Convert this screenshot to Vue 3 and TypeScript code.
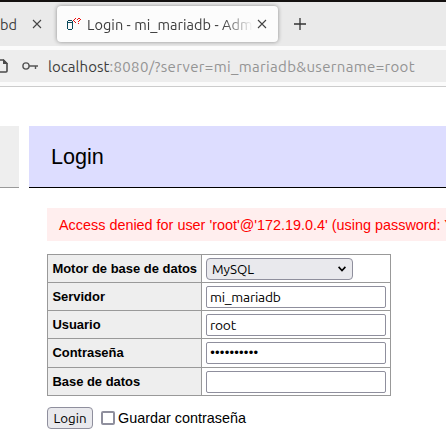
<script setup lang="ts">
import { ref } from 'vue'

interface Field {
  label: string
  type: 'text' | 'password'
  value: string
}

const driver = ref('MySQL')
const remember = ref(false)
const fields = ref<Field[]>([
  { label: 'Servidor', type: 'text', value: 'mi_mariadb' },
  { label: 'Usuario', type: 'text', value: 'root' },
  { label: 'Contraseña', type: 'password', value: '••••••••••' },
  { label: 'Base de datos', type: 'text', value: '' },
])
</script>

<template>
  <div class="window">
    <header class="tabs">
      <div class="tab-old">
        <span>bd</span>
        <svg class="close" viewBox="0 0 10 10"><path d="M1 1l8 8M9 1L1 9" /></svg>
      </div>
      <div class="tab">
        <svg class="favicon" viewBox="0 0 14 14" shape-rendering="crispEdges">
          <path fill="#0b4a5c" d="M1 3h4v1H1zM0 4h1v8H0zM5 4h1v8H5zM1 5h4v1H1zM1 12h4v1H1z" />
          <path fill="#e81010" d="M8 1h1v1H8zM7 2h1v1H7zM6 3h1v1H6zM7 4h1v1H7zM8 5h1v1H8zM11 1h2v1h-2zM10 2h1v1h-1zM13 2h1v1h-1zM12 3h1v1h-1zM11 4h1v1h-1zM11 6h1v1h-1z" />
        </svg>
        <span class="tab-title">Login - mi_mariadb - Adminer</span>
        <svg class="close" viewBox="0 0 10 10"><path d="M1 1l8 8M9 1L1 9" /></svg>
      </div>
      <svg class="plus" viewBox="0 0 12 12"><path d="M6 0v12M0 6h12" /></svg>
    </header>
    <div class="toolbar">
      <div class="url">
        <svg class="page-icon" viewBox="0 0 8 14">
          <path d="M0 1h3.5L7 4.5V12q0 1-1 1H0" fill="none" stroke="#4a4a4a" stroke-width="1.6" />
          <path d="M3 0v5h5z" fill="#4a4a4a" />
        </svg>
        <svg class="key" viewBox="0 0 16 8">
          <circle cx="4" cy="4" r="3.1" />
          <path d="M7 4h9M13.5 4v3" />
        </svg>
        <span class="address"><b>localhost</b>:8080/?server=mi_mariadb&amp;username=root</span>
      </div>
    </div>
    <main class="page">
      <div class="side"></div>
      <section class="content">
        <h2>Login</h2>
        <div class="body">
          <div class="error">Access denied for user 'root'@'172.19.0.4' (using password: YES)</div>
          <form @submit.prevent>
            <div class="grid">
              <div class="row">
                <div class="th">Motor de base de datos</div>
                <div class="td">
                  <button type="button" class="select">
                    <span>{{ driver }}</span>
                    <svg viewBox="0 0 8 6"><path d="M0.6 0.9L4 4.5L7.4 0.9" /></svg>
                  </button>
                </div>
              </div>
              <div v-for="f in fields" :key="f.label" class="row" :class="{ tall: f.type === 'password' }">
                <div class="th">{{ f.label }}</div>
                <div class="td">
                  <input v-model="f.value" type="text" :class="f.type" spellcheck="false" />
                </div>
              </div>
            </div>
            <div class="actions">
              <button class="submit">Login</button>
              <label><input v-model="remember" type="checkbox" />Guardar contraseña</label>
            </div>
          </form>
        </div>
      </section>
    </main>
  </div>
</template>

<style>
body {
  margin: 0;
  overflow: hidden;
}
</style>

<style scoped>
.window {
  box-sizing: border-box;
  width: 446px;
  height: 430px;
  overflow: hidden;
  border-top: 2px solid #141110;
  background: #fff;
  font-family: "Liberation Sans", Arial, sans-serif;
  font-size: 14.4px;
  color: #000;
}
.tabs {
  display: flex;
  align-items: center;
  height: 44px;
  background: #eaeaea;
  font-family: Ubuntu, "Noto Sans", sans-serif;
  font-size: 14.5px;
  color: #3d3d3d;
}
.tab-old {
  display: flex;
  align-items: center;
  width: 57px;
}
.tab-old span {
  width: 32px;
  flex: none;
}
.close {
  width: 10px;
  height: 10px;
  flex: none;
  fill: none;
  stroke: #444;
  stroke-width: 1.1;
}
.tab {
  box-sizing: border-box;
  display: flex;
  align-items: center;
  width: 221px;
  height: 36px;
  padding: 0 11px 0 10px;
  border-radius: 4px;
  background: #fcfcfc;
  box-shadow: 0 0 4px rgba(0, 0, 0, 0.4);
}
.favicon {
  width: 14px;
  height: 14px;
  flex: none;
  margin-right: 6px;
}
.tab-title {
  flex: 1;
  overflow: hidden;
  white-space: nowrap;
  margin-right: 4px;
  letter-spacing: 0.04px;
  -webkit-mask-image: linear-gradient(to right, #000 calc(100% - 30px), transparent);
  mask-image: linear-gradient(to right, #000 calc(100% - 30px), transparent);
}
.plus {
  width: 12px;
  height: 12px;
  margin-left: 16px;
  stroke: #333;
  stroke-width: 1.3;
}
.toolbar {
  box-sizing: border-box;
  height: 41px;
  padding: 4px 0;
  background: #fbfbfb;
  border-bottom: 1px solid #ccc;
}
.url {
  display: flex;
  align-items: center;
  height: 32px;
  background: #ededed;
  font-family: Ubuntu, "Noto Sans", sans-serif;
  font-size: 15px;
  color: #949494;
  white-space: nowrap;
}
.page-icon {
  width: 8px;
  height: 14px;
}
.key {
  width: 16px;
  height: 8px;
  margin: 0 10px 0 14px;
  fill: none;
  stroke: #555;
  stroke-width: 1.4;
}
.address {
  letter-spacing: 0.34px;
}
.address b {
  font-weight: 400;
  letter-spacing: 0.05px;
  color: #3d3d3d;
}
.page {
  display: flex;
  padding-top: 39px;
}
.side {
  box-sizing: border-box;
  flex: none;
  width: 19px;
  height: 62px;
  margin-right: 10px;
  background: #eee;
  border-bottom: 1px solid #999;
}
.content {
  flex: 1;
  min-width: 0;
}
h2 {
  box-sizing: border-box;
  height: 62px;
  margin: 0;
  padding-left: 22px;
  background: #ddf;
  border-bottom: 1px solid #000;
  font-size: 21.6px;
  font-weight: 400;
  line-height: 61px;
}
.body {
  padding: 20px 0 0 18px;
}
.error {
  height: 33px;
  padding-left: 12px;
  background: #fee;
  color: #f00;
  line-height: 34px;
  white-space: nowrap;
  overflow: hidden;
}
.grid {
  width: 342px;
  margin-top: 13px;
  border: 1px solid #999;
  border-bottom: 0;
}
.row {
  display: flex;
  height: 27px;
  border-bottom: 1px solid #999;
}
.row.tall {
  height: 28px;
}
.th {
  box-sizing: border-box;
  width: 154px;
  flex: none;
  padding-left: 4.4px;
  background: #eee;
  border-right: 1px solid #999;
  font-size: 12.96px;
  font-weight: 700;
  line-height: 27px;
  white-space: nowrap;
}
.td {
  padding: 3px 4px 0;
}
.td input,
.select,
.submit {
  box-sizing: border-box;
  height: 22px;
  margin: 0;
  border: 1px solid #8f8f9d;
  font-family: Ubuntu, "Noto Sans", sans-serif;
  font-size: 13.3px;
  color: #000;
}
.td input {
  display: block;
  width: 180px;
  padding: 0 3px;
  border-radius: 2px;
  background: #fff;
  font-size: 13.8px;
  letter-spacing: -0.22px;
  line-height: 20px;
  outline: none;
}
.td input.password {
  font-family: "DejaVu Sans", sans-serif;
  font-size: 12px;
  letter-spacing: -2.28px;
  padding-left: 2px;
}
.select {
  display: flex;
  align-items: center;
  justify-content: space-between;
  width: 147px;
  padding: 0 6px 0 5px;
  border-radius: 4px;
  background: #e9e9ed;
}
.select svg {
  width: 8px;
  height: 6px;
  fill: none;
  stroke: #000;
  stroke-width: 1.6;
}
.actions {
  display: flex;
  align-items: center;
  margin-top: 11px;
}
.submit {
  width: 46px;
  padding: 0;
  border-radius: 4px;
  background: #e9e9ed;
}
label {
  display: flex;
  align-items: center;
  margin-left: 8px;
  line-height: 18px;
  padding-bottom: 1px;
  white-space: nowrap;
}
label input {
  appearance: none;
  box-sizing: border-box;
  width: 14px;
  height: 14px;
  margin: 1px 3px 0 0;
  border: 2px solid #8f8f9d;
  border-radius: 2px;
  background: #fff;
}
</style>
